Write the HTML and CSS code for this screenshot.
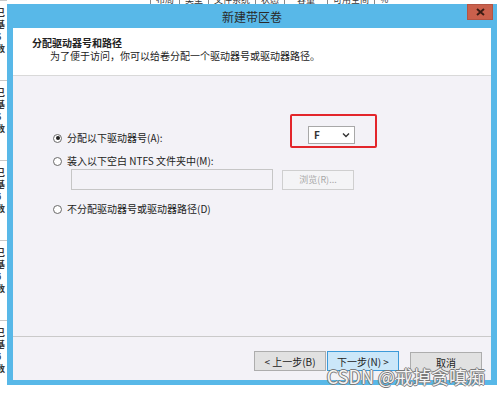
FILE: index.html
```html
<!DOCTYPE html>
<html lang="zh-CN">
<head>
    <meta charset="UTF-8">
    <title>新建带区卷</title>
    <link rel="stylesheet" href="styles.css">
</head>
<body>
    <div class="desktop">
        <div class="bg-left">
            <div class="group">巳<br>基<br>6<br>数</div>
            <div class="group">巳<br>基<br>6<br>数</div>
            <div class="group">巳<br>基<br>5<br>数</div>
            <div class="group">巳<br>基<br>5<br>数</div>
            <div class="group">巳<br>基<br>5<br>数</div>
        </div>
        <div class="bg-top">
            <span class="cell">布局</span>
            <span class="cell">类型</span>
            <span class="cell">文件系统</span>
            <span class="cell">状态</span>
            <span class="cell wide">容量</span>
            <span class="cell">可用空间</span>
            <span class="cell">%</span>
        </div>

        <div class="dialog">
            <div class="titlebar">
                <span class="title">新建带区卷</span>
                <span class="close">
                    <svg width="9" height="8" viewBox="0 0 9 8"><path d="M1 1 L8 7 M8 1 L1 7" stroke="#3b1c14" stroke-width="2"/></svg>
                </span>
            </div>

            <div class="client">
                <div class="header">
                    <div class="h-title">分配驱动器号和路径</div>
                    <div class="h-sub">为了便于访问，你可以给卷分配一个驱动器号或驱动器路径。</div>
                </div>

                <div class="body">
                    <div class="row">
                        <label class="choice"><span class="radio checked"></span>分配以下驱动器号(A):</label>
                        <div class="select">
                            <span>F</span>
                            <svg width="8" height="6" viewBox="0 0 8 6"><path d="M1 1.5 L4 4.5 L7 1.5" fill="none" stroke="#333" stroke-width="1.4"/></svg>
                            <span class="mark"></span>
                        </div>
                    </div>

                    <div class="row second">
                        <label class="choice"><span class="radio"></span>装入以下空白 NTFS 文件夹中(M):</label>
                    </div>
                    <div class="path-row">
                        <div class="path-input"></div>
                        <div class="browse">浏览(R)...</div>
                    </div>

                    <div class="row third">
                        <label class="choice"><span class="radio"></span>不分配驱动器号或驱动器路径(D)</label>
                    </div>
                </div>

                <div class="footer">
                    <button class="btn">&lt; 上一步(B)</button>
                    <button class="btn primary">下一步(N) &gt;</button>
                    <button class="btn cancel">取消</button>
                </div>
            </div>

            <div class="watermark">CSDN @戒掉贪嗔痴</div>
        </div>
    </div>
</body>
</html>
```

FILE: styles.css
```css
:root {
    --frame-color: #58b8e8;
    --client-bg: #f3f2f7;
    --line-color: #cacaca;
    --text-color: #222;
}

body {
    margin: 0;
    background-color: #fff;
    font-family: "Noto Sans CJK SC", sans-serif;
    font-size: 10px;
    color: var(--text-color);
}

.desktop {
    width: 499px;
    height: 393px;
    display: grid;
    grid-template-columns: 7px 490px 2px;
    grid-template-rows: 4px 381px 8px;
    overflow: hidden;
}

/* window behind the dialog */
.bg-left {
    grid-column: 1;
    grid-row: 1 / 4;
    overflow: hidden;
    display: flex;
    flex-direction: column;
}

.bg-left .group {
    height: 80px;
    flex-shrink: 0;
    box-sizing: border-box;
    border-top: 1px solid #c8c8c8;
    padding-top: 6px;
    margin-left: -4px;
    font-size: 9px;
    font-weight: bold;
    line-height: 12px;
    color: #333;
}

.bg-top {
    grid-column: 2 / 4;
    grid-row: 1;
    display: flex;
    overflow: hidden;
    padding-left: 143px;
}

.bg-top .cell {
    height: 9px;
    margin-top: -5px;
    padding: 0 5px;
    border-left: 1px solid #888;
    font-size: 9px;
    line-height: 9px;
    color: #333;
    white-space: nowrap;
}

.bg-top .cell.wide {
    padding: 0 12px;
}

/* dialog */
.dialog {
    grid-column: 2;
    grid-row: 2;
    position: relative;
    display: flex;
    flex-direction: column;
    background-color: var(--frame-color);
    padding: 0 6px 5px 6px;
}

.titlebar {
    height: 24px;
    flex-shrink: 0;
    position: relative;
    display: flex;
    align-items: center;
    justify-content: center;
}

.title {
    font-size: 12px;
    color: #2a2a2a;
}

.close {
    position: absolute;
    top: 0;
    right: -2px;
    width: 26px;
    height: 16px;
    background-color: #c9604c;
    border: 1px solid #b45443;
    box-sizing: border-box;
    display: flex;
    align-items: center;
    justify-content: center;
}

.client {
    flex: 1;
    display: flex;
    flex-direction: column;
    background-color: var(--client-bg);
}

.header {
    height: 48px;
    box-sizing: border-box;
    background-color: #fff;
    border-bottom: 1px solid #d9d9d9;
    padding: 8px 0 0 19px;
}

.h-title {
    font-weight: bold;
    line-height: 13px;
}

.h-sub {
    line-height: 13px;
    padding-left: 18px;
}

.body {
    flex: 1;
    padding: 54px 0 0 40px;
}

.row {
    display: flex;
    align-items: flex-start;
    line-height: 16px;
}

.row.second {
    margin-top: 7px;
}

.row.third {
    margin-top: 11px;
}

.choice {
    display: flex;
    align-items: center;
    width: 255px;
    flex-shrink: 0;
}

.radio {
    width: 9px;
    height: 9px;
    box-sizing: border-box;
    border: 1px solid #6a6a6a;
    border-radius: 50%;
    background-color: #fff;
    margin-right: 5px;
    display: flex;
    align-items: center;
    justify-content: center;
}

.radio.checked::after {
    content: "";
    width: 4px;
    height: 4px;
    border-radius: 50%;
    background-color: #222;
}

.select {
    position: relative;
    width: 47px;
    height: 18px;
    box-sizing: border-box;
    margin-top: -4px;
    padding: 0 4px 0 5px;
    border: 1px solid #a8a8a8;
    background-color: #fff;
    display: flex;
    align-items: center;
    justify-content: space-between;
    font-size: 10px;
    font-weight: bold;
    color: #333;
}

/* red annotation drawn over the screenshot */
.mark {
    position: absolute;
    top: -13px;
    left: -19px;
    right: -23px;
    bottom: -5px;
    border: 2px solid #e3262b;
    border-radius: 2px;
}

.path-row {
    display: flex;
    align-items: flex-start;
    margin-left: 18px;
}

.path-input {
    width: 202px;
    height: 21px;
    box-sizing: border-box;
    border: 1px solid #c6c6c6;
}

.browse {
    width: 72px;
    height: 20px;
    box-sizing: border-box;
    margin: 1px 0 0 9px;
    border: 1px solid #cfcfcf;
    background-color: #f4f4f6;
    color: #a8a8a8;
    font-size: 9px;
    line-height: 18px;
    text-align: center;
}

.footer {
    height: 44px;
    flex-shrink: 0;
    box-sizing: border-box;
    border-top: 1px solid var(--line-color);
    display: flex;
    align-items: flex-start;
    justify-content: flex-end;
    padding: 14px 9px 0 0;
    gap: 1px;
}

.btn {
    width: 72px;
    height: 20px;
    box-sizing: border-box;
    padding: 0;
    border: 1px solid #adadad;
    background-color: #e1e1e1;
    font-family: "Noto Sans CJK SC", sans-serif;
    font-size: 10px;
    color: #222;
}

.btn.primary {
    background-color: #cbe7f9;
    border-color: #3c9ad8;
}

.btn.cancel {
    margin: 1px 0 0 10px;
}

.watermark {
    position: absolute;
    right: 12px;
    bottom: -3px;
    font-size: 18px;
    line-height: 24px;
    color: #f4f4f4;
    text-shadow: 1px 0 0 #7a7a7a, -1px 0 0 #7a7a7a, 0 1px 0 #7a7a7a, 0 -1px 0 #7a7a7a;
    white-space: nowrap;
}
```
